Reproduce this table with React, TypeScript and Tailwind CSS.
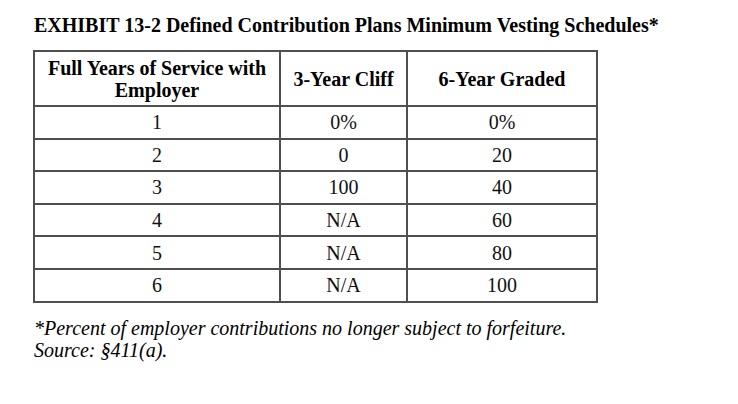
import React from "react";

const rows = [
  ["1", "0%", "0%"],
  ["2", "0", "20"],
  ["3", "100", "40"],
  ["4", "N/A", "60"],
  ["5", "N/A", "80"],
  ["6", "N/A", "100"],
];

export default function App() {
  return (
    <div className="w-[738px] h-[404px] bg-white text-black font-['Liberation_Serif',serif]">
      <div className="pl-[34px] pt-[13px]">
        <h1 className="text-[20px] font-bold leading-[24px] whitespace-nowrap">
          EXHIBIT 13-2 Defined Contribution Plans Minimum Vesting Schedules*
        </h1>
        <table className="ml-[-1px] mt-[13px] border-collapse table-fixed w-[563px] text-[20px]">
          <colgroup>
            <col className="w-[246px]" />
            <col className="w-[127px]" />
            <col className="w-[190px]" />
          </colgroup>
          <thead>
            <tr className="h-[55px]">
              <th className="border-2 border-[#4f4f4f] font-bold leading-[22px] px-2">
                Full Years of Service with Employer
              </th>
              <th className="border-2 border-[#4f4f4f] font-bold leading-[22px]">3-Year Cliff</th>
              <th className="border-2 border-[#4f4f4f] font-bold leading-[22px]">6-Year Graded</th>
            </tr>
          </thead>
          <tbody>
            {rows.map((r, i) => (
              <tr key={i} className="h-[32.6px]">
                {r.map((c, j) => (
                  <td key={j} className="border-2 border-[#4f4f4f] text-center leading-[22px] font-normal text-[#111]">
                    {c}
                  </td>
                ))}
              </tr>
            ))}
          </tbody>
        </table>
        <div className="mt-[14px] italic text-[20px] leading-[22px] whitespace-nowrap">
          <div>*Percent of employer contributions no longer subject to forfeiture.</div>
          <div>Source: §411(a).</div>
        </div>
      </div>
    </div>
  );
}
